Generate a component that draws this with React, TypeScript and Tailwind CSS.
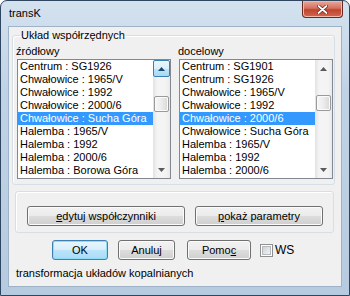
import React from 'react';

const leftItems = [
  'Centrum : SG1926',
  'Chwałowice : 1965/V',
  'Chwałowice : 1992',
  'Chwałowice : 2000/6',
  'Chwałowice : Sucha Góra',
  'Halemba : 1965/V',
  'Halemba : 1992',
  'Halemba : 2000/6',
  'Halemba : Borowa Góra',
];

const rightItems = [
  'Centrum : SG1901',
  'Centrum : SG1926',
  'Chwałowice : 1965/V',
  'Chwałowice : 1992',
  'Chwałowice : 2000/6',
  'Chwałowice : Sucha Góra',
  'Halemba : 1965/V',
  'Halemba : 1992',
  'Halemba : 2000/6',
];

const Triangle = ({ down, color }: { down?: boolean; color: string }) => (
  <svg width="7" height="4" viewBox="0 0 7 4">
    <path d={down ? 'M0 0H7L3.5 4Z' : 'M0 4H7L3.5 0Z'} fill={color} />
  </svg>
);

const Scrollbar = ({ hoverUp, gap }: { hoverUp?: boolean; gap: string }) => (
  <div className="flex h-full w-[17px] flex-col bg-[linear-gradient(to_right,#e2e2e2,#f4f4f4_25%,#f4f4f4_75%,#e9e9e9)]">
    {hoverUp ? (
      <div className="flex h-[17px] items-center justify-center rounded-[2px] border border-[#3c7fb1] bg-[linear-gradient(#eaf6fd,#d9f0fc_50%,#bee6fd_50%,#a7d9f5)]">
        <Triangle color="#1e4a6b" />
      </div>
    ) : (
      <div className="flex h-[17px] items-center justify-center">
        <Triangle color="#5a5a5a" />
      </div>
    )}
    <div className={gap} />
    <div className="mx-[1px] h-[16px] rounded-[2px] border border-[#9a9a9a] bg-[linear-gradient(to_right,#f7f7f7,#ececec_50%,#d8d8d8)] shadow-[inset_0_0_0_1px_#fbfbfb]" />
    <div className="flex-1" />
    <div className="flex h-[17px] items-center justify-center">
      <Triangle down color="#5a5a5a" />
    </div>
  </div>
);

const ListBox = ({ items, selected, hoverUp, gap }: { items: string[]; selected: number; hoverUp?: boolean; gap: string }) => (
  <div className="flex h-[120px] w-[154px] border border-[#828790] bg-white">
    <div className="flex-1">
      {items.map((t, i) => (
        <div
          key={t}
          className={`h-[13px] whitespace-nowrap pl-[2px] leading-[13px] ${i === selected ? 'bg-[#3399ff] text-white' : 'text-black'}`}
        >
          {t}
        </div>
      ))}
    </div>
    <Scrollbar hoverUp={hoverUp} gap={gap} />
  </div>
);

const Button = ({ children, w, primary }: { children: React.ReactNode; w: string; primary?: boolean }) => (
  <div
    className={`flex h-[20px] ${w} items-center justify-center rounded-[3px] border leading-[14px] text-black ${
      primary
        ? 'border-[#3c7fb1] bg-[linear-gradient(#e8f6fd,#d6effc_50%,#bce4fa_50%,#a9dcf6)] shadow-[inset_0_0_0_1px_#8fdcf7]'
        : 'border-[#707070] bg-[linear-gradient(#f2f2f2,#ebebeb_50%,#dddddd_50%,#cfcfcf)] shadow-[inset_0_0_0_1px_#fbfbfb]'
    }`}
  >
    {children}
  </div>
);

export default function App() {
  return (
    <div className="h-[296px] w-[350px] bg-white font-['Liberation_Sans',Arial,sans-serif] text-[11px]">
      <div className="flex h-full w-full flex-col rounded-t-[7px] border border-[#2f4660] bg-[linear-gradient(#d4e2ef,#c0d3e6_30%,#b7cbe0)]">
        {/* Title bar */}
        <div className="flex h-[25px] items-start">
          <span className="ml-[8px] mt-[5px] leading-[14px] text-black">transK</span>
          <div className="ml-auto mr-[6px] flex h-[17px] w-[41px] items-center justify-center rounded-b-[4px] border border-t-0 border-[#6b2a20] bg-[linear-gradient(#e9a99a,#d4715f_45%,#c2432f_55%,#d06a4f)] shadow-[inset_0_0_0_1px_#f0b9aa]">
            <svg width="11" height="9" viewBox="0 0 11 9">
              <path d="M1.5 1L9.5 8M9.5 1L1.5 8" stroke="#5a2018" strokeWidth="3.2" strokeLinecap="round" />
              <path d="M1.5 1L9.5 8M9.5 1L1.5 8" stroke="#ffffff" strokeWidth="1.8" strokeLinecap="round" />
            </svg>
          </div>
        </div>

        {/* Client area */}
        <div className="mx-[7px] mb-[8px] flex flex-1 flex-col border border-[#9fb3c8] bg-[#f0f0f0] text-black">
          <fieldset className="ml-[3px] mt-[1px] w-[323px] rounded-[3px] border border-[#d5dfe5] pb-[5px] pl-[4px] pr-[1px] shadow-[inset_1px_1px_0_#ffffff]">
            <legend className="ml-[3px] px-[1px] leading-[14px]">Układ współrzędnych</legend>
            <div className="mt-[3px] flex gap-[8px]">
              <div className="flex flex-col">
                <div className="-ml-[1px] mb-[1px] h-[13px] leading-[13px]">źródłowy</div>
                <ListBox items={leftItems} selected={4} hoverUp gap="h-[19px]" />
              </div>
              <div className="flex flex-col">
                <div className="-ml-[1px] mb-[1px] h-[13px] leading-[13px]">docelowy</div>
                <ListBox items={rightItems} selected={4} gap="h-[18px]" />
              </div>
            </div>
          </fieldset>

          <div className="ml-[6px] mt-[6px] flex h-[42px] w-[319px] gap-[10px] rounded-[3px] border border-[#d5dfe5] pl-[11px] pt-[14px] shadow-[inset_1px_1px_0_#ffffff]">
            <Button w="w-[158px]">
              <span>
                <span className="underline">e</span>dytuj współczynniki
              </span>
            </Button>
            <Button w="w-[128px]">
              <span>
                <span className="underline">p</span>okaż parametry
              </span>
            </Button>
          </div>

          <div className="ml-[43px] mt-[7px] flex items-center">
            <Button w="w-[56px]" primary>
              OK
            </Button>
            <div className="w-[10px]" />
            <Button w="w-[57px]">Anuluj</Button>
            <div className="w-[12px]" />
            <Button w="w-[64px]">
              <span>
                Pomo<span className="underline">c</span>
              </span>
            </Button>
            <div className="ml-[9px] flex h-[13px] w-[13px] items-center justify-center border border-[#8e8f8f] bg-white">
              <div className="h-[9px] w-[9px] border border-[#b5b9bd] bg-[linear-gradient(135deg,#cdd1d6,#f4f4f4)]" />
            </div>
            <span className="ml-[2px] text-[12px]">WS</span>
          </div>

          <div className="ml-[7px] mt-[6px] leading-[14px]">transformacja układów kopalnianych</div>
        </div>
      </div>
    </div>
  );
}
